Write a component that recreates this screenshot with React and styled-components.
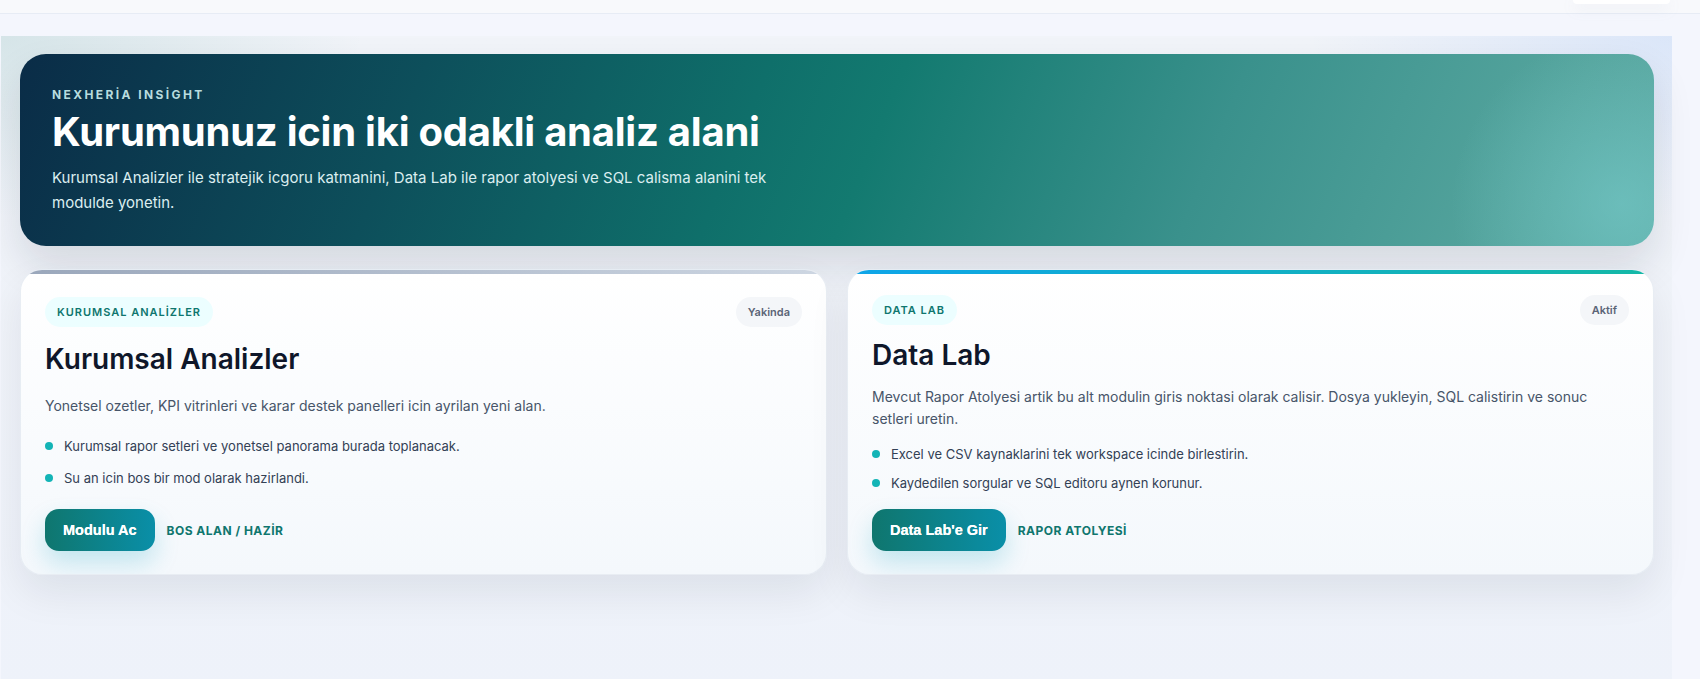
import React from 'react';
import styled, { createGlobalStyle } from 'styled-components';

const GlobalStyle = createGlobalStyle`
    * {
        box-sizing: border-box;
    }
    body {
        margin: 0;
        background: #f4f6fd;
        font-family: Inter, "Noto Sans", "Liberation Sans", sans-serif;
        color: #0f172a;
    }
`;

const StShell = styled.div`
    min-height: 100vh;
    overflow: hidden;
`;

const StTopBar = styled.header`
    height: 14px;
    background: #f8f9fc;
    border-bottom: 1px solid #e7ecf5;
    display: flex;
    justify-content: flex-end;
    padding-right: 30px;
`;

const StTopAction = styled.div`
    width: 97px;
    height: 4px;
    background: #ffffff;
    border-radius: 0 0 10px 10px;
    box-shadow: 0 4px 14px rgba(148, 163, 184, 0.18);
`;

const StMain = styled.main`
    padding: 22px 28px 0 1px;
`;

const StWorkspace = styled.section`
    min-height: 660px;
    padding: 18px 18px 40px 19px;
    background:
        radial-gradient(ellipse 520px 260px at 0% 0%, rgba(15, 118, 110, 0.12), transparent 70%),
        radial-gradient(ellipse 520px 260px at 100% 0%, rgba(59, 130, 246, 0.12), transparent 70%),
        linear-gradient(180deg, #f1f4f9 0%, #eef2fa 100%);
`;

const StHero = styled.div`
    position: relative;
    overflow: hidden;
    border-radius: 26px;
    padding: 33px 32px 30px;
    color: #ffffff;
    background:
        radial-gradient(circle 170px at 98% 78%, rgba(120, 205, 205, 0.55), transparent 100%),
        linear-gradient(112deg, #0a2c47 0%, #0d4f5b 24%, #0f6f6a 44%, #137a70 52%, #3a918c 72%, #56a59e 92%, #5eaca6 100%);
    box-shadow: 0 20px 40px rgba(15, 23, 42, 0.12);
`;

const StEyebrow = styled.div`
    font-size: 12px;
    font-weight: 700;
    letter-spacing: 0.2em;
    color: #b8dcdf;
    margin-bottom: 8px;
`;

const StHeroTitle = styled.h1`
    margin: 0;
    font-size: 40px;
    line-height: 1.1;
    font-weight: 700;
    letter-spacing: -0.006em;
    color: #ffffff;
`;

const StHeroText = styled.p`
    margin: 12px 0 0;
    max-width: 720px;
    font-size: 15px;
    line-height: 1.65;
    color: #dbeef0;
`;

const StGrid = styled.div`
    display: grid;
    grid-template-columns: 1fr 1fr;
    gap: 20px;
    margin-top: 23px;
`;

const StCard = styled.article`
    position: relative;
    overflow: hidden;
    display: grid;
    gap: 14px;
    padding: 25px 24px 23px;
    border-radius: 22px;
    border: 1px solid rgba(226, 232, 240, 0.8);
    background: linear-gradient(180deg, #ffffff 0%, #f4f8fc 100%);
    box-shadow: 0 18px 40px rgba(15, 23, 42, 0.08);

    &::before {
        content: '';
        position: absolute;
        top: 0;
        left: 0;
        right: 0;
        height: 4px;
        background: ${(props) =>
            props.$active
                ? 'linear-gradient(90deg, #0ea5e9 0%, #14b8a6 100%)'
                : 'linear-gradient(90deg, #9aa7bb 0%, #cdd6e2 100%)'};
    }
`;

const StCardHead = styled.div`
    display: flex;
    align-items: center;
    justify-content: space-between;
`;

const StTag = styled.span`
    display: inline-flex;
    align-items: center;
    height: 30px;
    padding: 0 12px;
    border-radius: 999px;
    background: #ecfeff;
    color: #0f766e;
    font-size: 11px;
    font-weight: 600;
    letter-spacing: 0.09em;
`;

const StStatus = styled.span`
    display: inline-flex;
    align-items: center;
    height: 30px;
    padding: 0 12px;
    border-radius: 999px;
    background: #f4f6f9;
    color: #5b6476;
    font-size: 11px;
    font-weight: 600;
`;

const StCardTitle = styled.h2`
    margin: 0;
    font-size: 28px;
    line-height: 1.2;
    font-weight: 600;
    color: #0f172a;
`;

const StCardText = styled.p`
    margin: 0;
    font-size: 14px;
    line-height: 22px;
    color: #475569;
`;

const StList = styled.ul`
    margin: 0;
    padding: 0;
    list-style: none;
    display: grid;
    gap: 9px;
`;

const StItem = styled.li`
    display: flex;
    align-items: center;
    gap: 11px;
    font-size: 13px;
    line-height: 20px;
    color: #334155;

    &::before {
        content: '';
        width: 8px;
        height: 8px;
        flex-shrink: 0;
        border-radius: 50%;
        background: #13b4b6;
    }
`;

const StActions = styled.div`
    align-self: end;
    display: flex;
    align-items: center;
    gap: 12px;
    margin-top: 2px;
`;

const StBtn = styled.button`
    height: 42px;
    padding: 0 18px;
    border: none;
    border-radius: 14px;
    background: linear-gradient(90deg, #0f766e 0%, #0a8fa8 100%);
    color: #ffffff;
    font-family: "Liberation Sans", Arial, sans-serif;
    font-size: 14.5px;
    font-weight: 700;
    text-shadow: 0 0 0.4px #ffffff;
    box-shadow: 0 12px 24px rgba(14, 165, 190, 0.22);
    cursor: pointer;
`;

const StNote = styled.span`
    font-size: 12px;
    font-weight: 700;
    letter-spacing: 0.04em;
    color: #0f766e;
`;

const modules = [
    {
        id: 'kurumsal',
        tag: 'KURUMSAL ANALİZLER',
        status: 'Yakinda',
        title: 'Kurumsal Analizler',
        text: 'Yonetsel ozetler, KPI vitrinleri ve karar destek panelleri icin ayrilan yeni alan.',
        items: ['Kurumsal rapor setleri ve yonetsel panorama burada toplanacak.', 'Su an icin bos bir mod olarak hazirlandi.'],
        button: 'Modulu Ac',
        note: 'BOS ALAN / HAZİR',
        active: false,
    },
    {
        id: 'datalab',
        tag: 'DATA LAB',
        status: 'Aktif',
        title: 'Data Lab',
        text: 'Mevcut Rapor Atolyesi artik bu alt modulin giris noktasi olarak calisir. Dosya yukleyin, SQL calistirin ve sonuc setleri uretin.',
        items: ['Excel ve CSV kaynaklarini tek workspace icinde birlestirin.', 'Kaydedilen sorgular ve SQL editoru aynen korunur.'],
        button: "Data Lab'e Gir",
        note: 'RAPOR ATOLYESİ',
        active: true,
    },
];

function App() {
    return (
        <StShell>
            <GlobalStyle />
            <StTopBar>
                <StTopAction />
            </StTopBar>
            <StMain>
                <StWorkspace>
                    <StHero>
                        <StEyebrow>NEXHERİA INSİGHT</StEyebrow>
                        <StHeroTitle>Kurumunuz icin iki odakli analiz alani</StHeroTitle>
                        <StHeroText>
                            Kurumsal Analizler ile stratejik icgoru katmanini, Data Lab ile rapor atolyesi ve SQL calisma alanini tek modulde yonetin.
                        </StHeroText>
                    </StHero>

                    <StGrid>
                        {modules.map((mod) => (
                            <StCard key={mod.id} $active={mod.active}>
                                <StCardHead>
                                    <StTag>{mod.tag}</StTag>
                                    <StStatus>{mod.status}</StStatus>
                                </StCardHead>
                                <StCardTitle>{mod.title}</StCardTitle>
                                <StCardText>{mod.text}</StCardText>
                                <StList>
                                    {mod.items.map((item) => (
                                        <StItem key={item}>{item}</StItem>
                                    ))}
                                </StList>
                                <StActions>
                                    <StBtn>{mod.button}</StBtn>
                                    <StNote>{mod.note}</StNote>
                                </StActions>
                            </StCard>
                        ))}
                    </StGrid>
                </StWorkspace>
            </StMain>
        </StShell>
    );
}

export default App;
